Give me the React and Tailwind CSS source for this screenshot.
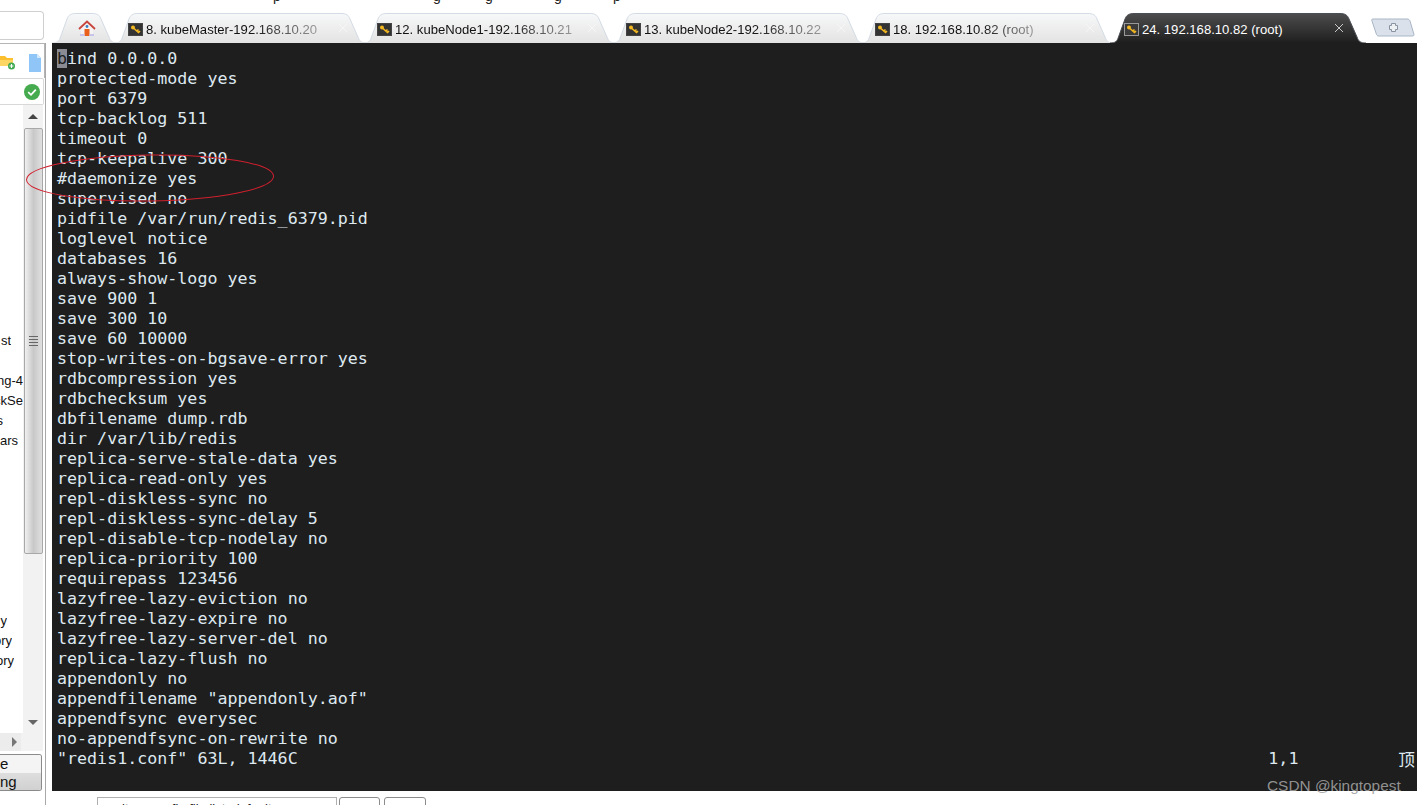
const lines = [
  "protected-mode yes",
  "port 6379",
  "tcp-backlog 511",
  "timeout 0",
  "tcp-keepalive 300",
  "#daemonize yes",
  "supervised no",
  "pidfile /var/run/redis_6379.pid",
  "loglevel notice",
  "databases 16",
  "always-show-logo yes",
  "save 900 1",
  "save 300 10",
  "save 60 10000",
  "stop-writes-on-bgsave-error yes",
  "rdbcompression yes",
  "rdbchecksum yes",
  "dbfilename dump.rdb",
  "dir /var/lib/redis",
  "replica-serve-stale-data yes",
  "replica-read-only yes",
  "repl-diskless-sync no",
  "repl-diskless-sync-delay 5",
  "repl-disable-tcp-nodelay no",
  "replica-priority 100",
  "requirepass 123456",
  "lazyfree-lazy-eviction no",
  "lazyfree-lazy-expire no",
  "lazyfree-lazy-server-del no",
  "replica-lazy-flush no",
  "appendonly no",
  'appendfilename "appendonly.aof"',
  "appendfsync everysec",
  "no-appendfsync-on-rewrite no",
];

const tabs = [
  "8. kubeMaster-192.168.10.20",
  "12. kubeNode1-192.168.10.21",
  "13. kubeNode2-192.168.10.22",
  "18. 192.168.10.82 (root)",
];

// rows of the session tree, only the right ends show, each cut at its own width
const treeRows = {
  11: { text: "st", width: "w-[11px]" },
  13: { text: "ng-4", width: "w-[23px]" },
  14: { text: "ckSe", width: "w-[23px]" },
  15: { text: "s", width: "w-[3px]" },
  16: { text: "ars", width: "w-[18px]" },
  25: { text: "y", width: "w-[7px]" },
  26: { text: "ory", width: "w-[12px]" },
  27: { text: "ory", width: "w-[14px]" },
};

function KeyIcon({ active }) {
  return (
    <svg width="15" height="13" viewBox="0 0 15 13" className="shrink-0">
      <rect x="0.5" y="0.5" width="14" height="12" fill={active ? "#3a3a3a" : "#333"} stroke={active ? "#999" : "#444"} />
      <circle cx="5" cy="4.5" r="2" fill="#f5b921" />
      <path d="M6 5.5 L11 10 M9 8 L10.5 6.5 M10.5 9.5 L12 8" stroke="#f5b921" strokeWidth="1.6" fill="none" />
    </svg>
  );
}

function TabShape({ w, active }) {
  let d = `M0 30 C6 30 7 28 8.5 24 L15 6 C16.5 2 19 0.5 24 0.5 H${w - 26} C${w - 21} 0.5 ${w - 18.5} 2 ${w - 17} 6 L${w - 9} 24 C${w - 7.5} 28 ${w - 6} 30 ${w} 30`;
  let id = active ? "tabActive" : "tabIdle";
  return (
    <svg width={w} height="30" className="absolute left-0 top-0">
      <defs>
        <linearGradient id={id} x1="0" y1="0" x2="0" y2="1">
          <stop offset="0" stopColor={active ? "#4d4d4d" : "#f7f8f9"} />
          <stop offset="1" stopColor={active ? "#1e1e1e" : "#e3e3e3"} />
        </linearGradient>
      </defs>
      <path d={d} fill={`url(#${id})`} stroke={active ? "#4a4f55" : "#d3dbe4"} />
    </svg>
  );
}

function Tab({ title, active }) {
  let w = active ? 256 : 253;
  return (
    <div className={`relative h-[30px] -ml-[4px] shrink-0 ${active ? "w-[256px]" : "w-[253px]"}`}>
      <TabShape w={w} active={active} />
      <div className="relative flex items-center h-[30px] pl-[14px] pt-[3px]">
        <KeyIcon active={active} />
        <span className={`ml-[3px] text-[13.1px] whitespace-nowrap ${active ? "text-white" : "bg-gradient-to-r from-[#111] from-[60%] to-[#999] bg-clip-text text-transparent"}`}>
          {title}
        </span>
      </div>
      <svg width="10" height="10" viewBox="0 0 10 10" className="absolute left-[224px] top-[10px]">
        <path d="M1 1 L9 9 M9 1 L1 9" stroke={active ? "#c8c8c8" : "#f6f6f6"} strokeWidth="1" />
      </svg>
    </div>
  );
}

function HomeTab() {
  return (
    <div className="relative h-[30px] w-[66px] shrink-0">
      <TabShape w={66} />
      <svg width="18" height="17" viewBox="0 0 18 17" className="absolute left-[26px] top-[7px]">
        <path d="M3 8 V15 H15 V8 L9 3 Z" fill="#f4f2f2" />
        <path d="M1 9 L9 1.5 L17 9" fill="none" stroke="#c8453c" strokeWidth="1.8" />
        <circle cx="9" cy="6.5" r="1.4" fill="#3a7fc0" />
        <rect x="6.5" y="9" width="5" height="7" fill="#e8601c" />
        <rect x="2" y="14" width="4.5" height="2" fill="#c6c4ea" />
        <rect x="11.5" y="14" width="4.5" height="2" fill="#c6c4ea" />
      </svg>
    </div>
  );
}

function Sidebar() {
  return (
    <div className="w-[52px] shrink-0 flex flex-col pt-[11px] bg-white">
      <div className="h-[29px] w-[44px] border border-l-0 border-[#cfcfcf] rounded-r-[4px] mb-[3px]" />
      <div className="w-[46px] flex-1 border-r border-[#a8a8a8] flex flex-col min-h-0">
        {/* toolbar */}
        <div className="h-[35px] w-[45px] border-t border-r border-[#b5b5b5] flex items-end justify-between pb-[6px] pr-[3px] shrink-0">
          <svg width="16" height="15" viewBox="0 0 16 15" className="mb-[2px]">
            <path d="M0 1 H5 L7 3 H13 V11 H0 Z" fill="#fcc02e" />
            <rect x="0" y="5" width="13" height="6" fill="#fdd663" />
            <circle cx="11.5" cy="11" r="3.5" fill="#3fa950" />
            <path d="M9.5 11 H13.5 M11.5 9 V13" stroke="#fff" strokeWidth="1.2" />
          </svg>
          <svg width="12" height="18" viewBox="0 0 12 18">
            <path d="M0 0 H8 L12 4 V18 H0 Z" fill="#90c6f7" />
            <path d="M8 0 L12 4 H8 Z" fill="#d4e8fb" />
          </svg>
        </div>
        {/* filter row */}
        <div className="h-[27px] w-[44px] border-y border-r border-[#d8d8d8] rounded-r-[2px] flex items-center justify-end pr-[3px] shrink-0">
          <svg width="16" height="16" viewBox="0 0 16 16">
            <circle cx="8" cy="8" r="8" fill="#46ab4f" />
            <path d="M4.2 8.2 L7 10.8 L11.8 5.6" fill="none" stroke="#fff" strokeWidth="1.8" />
          </svg>
        </div>
        {/* session tree */}
        <div className="flex h-[628px] shrink-0">
          <div className="w-[23px] pt-[6px] overflow-hidden font-['Liberation_Sans',sans-serif] text-[13px] text-[#111]">
            {Array.from({ length: 31 }).map((_, i) => (
              <div key={i} className={`h-[20px] leading-[20px] flex justify-end whitespace-nowrap overflow-hidden ${treeRows[i] ? treeRows[i].width : ""}`}>
                {treeRows[i] ? treeRows[i].text : ""}
              </div>
            ))}
          </div>
          <div className="w-[20px] bg-[#f2f2f2] flex flex-col items-center">
            <div className="h-[23px] shrink-0 flex items-center justify-center">
              <div className="w-0 h-0 border-x-[5px] border-x-transparent border-b-[5px] border-b-[#444]" />
            </div>
            <div className="w-[19px] h-[426px] shrink-0 rounded-[2px] border border-[#a8a8a8] bg-gradient-to-r from-[#f0f0f0] via-[#c8c8c8] to-[#e0e0e0] flex flex-col items-center justify-center gap-[2px]">
              <div className="w-[9px] h-[1px] bg-[#666]" />
              <div className="w-[9px] h-[1px] bg-[#666]" />
              <div className="w-[9px] h-[1px] bg-[#666]" />
              <div className="w-[9px] h-[1px] bg-[#666]" />
            </div>
            <div className="flex-1" />
            <div className="h-[22px] shrink-0 flex items-center justify-center">
              <div className="w-0 h-0 border-x-[5px] border-x-transparent border-t-[5px] border-t-[#666]" />
            </div>
          </div>
        </div>
        {/* horizontal scrollbar */}
        <div className="h-[18px] w-[43px] bg-[#f2f2f2] flex items-center shrink-0">
          <div className="w-[21px] h-full bg-[#ececec] flex items-center justify-end pr-[4px]">
            <div className="w-0 h-0 border-y-[5px] border-y-transparent border-l-[5px] border-l-[#777]" />
          </div>
        </div>
        {/* connect button */}
        <div className="h-[37px] w-[42px] mt-[3px] overflow-hidden rounded-r-[3px] border border-l-0 border-[#8a8a8a] flex flex-col font-['Liberation_Sans',sans-serif] text-[15px] text-[#111] shrink-0">
          <div className="h-[18px] bg-[#f4f4f4] leading-[18px]">e</div>
          <div className="flex-1 bg-gradient-to-b from-[#dedede] to-[#d0d0d0] leading-[18px] whitespace-nowrap">ng</div>
        </div>
      </div>
    </div>
  );
}

function App() {
  return (
    <div className="relative flex w-[1417px] h-[805px] overflow-hidden bg-white">
      <Sidebar />
      <div className="flex-1 min-w-0 flex flex-col">
        {/* tab strip */}
        <div className="h-[43px] shrink-0 pt-[13px] flex items-start font-['Liberation_Sans',sans-serif]">
          <HomeTab />
          {tabs.map((t) => (
            <Tab title={t} key={t} />
          ))}
          <Tab title="24. 192.168.10.82 (root)" active />
          <svg width="44" height="19" viewBox="0 0 44 19" className="ml-[5px] mt-[5px] shrink-0">
            <path d="M1.5 1 H36 C38 1 38.5 2 39 3 L43 16.5 C43.3 17.5 42.5 18 41 18 H8 C6.5 18 6 17.5 5.5 16.5 L1 3 C0.6 1.6 0.8 1 1.5 1 Z" fill="#dae1ea" stroke="#a9b6c6" />
            <path d="M20.5 5.5 H24.5 V7.5 H26.5 V11.5 H24.5 V13.5 H20.5 V11.5 H18.5 V7.5 H20.5 Z" fill="#eef1f4" stroke="#8894a2" />
          </svg>
        </div>

        {/* terminal */}
        <div className="h-[748px] shrink-0 bg-[#1e1e1e] pt-[6px] pl-[5px] pr-[2px] font-['DejaVu_Sans_Mono',monospace] text-[16.67px] leading-[20px] text-[#dfe9f0] whitespace-pre">
          <div>
            <span className="bg-[#8b8b94] text-[#1e1e1e]">b</span>ind 0.0.0.0
          </div>
          {lines.map((l, i) => (
            <div key={i}>{l}</div>
          ))}
          <div className="flex">
            <span className="flex-1">"redis1.conf" 63L, 1446C</span>
            <span className="w-[130px]">1,1</span>
            <span className="font-['Noto_Sans_CJK_SC',sans-serif]">顶</span>
          </div>
        </div>

        {/* bottom dialog edge */}
        <div className="flex-1 pt-[6px] pl-[45px] flex gap-[2px] items-start">
          <div className="w-[240px] h-[10px] border border-[#b0b0b0] pl-[24px] pt-[3px] leading-[16px] text-[13px] font-['Liberation_Sans',sans-serif] text-[#222] whitespace-pre overflow-hidden">
            {"lt            fig file list  default"}
          </div>
          <div className="w-[41px] h-[10px] border border-[#8c8c8c] rounded-t-[3px]" />
          <div className="w-[42px] h-[10px] ml-[2px] border border-[#8c8c8c] rounded-t-[3px]" />
        </div>
      </div>

      {/* descenders of the window title, cut by the top edge */}
      <div className="absolute left-0 top-0 w-full h-[4px] overflow-hidden font-['Liberation_Sans',sans-serif] text-[14px] leading-[14px] text-[#222]">
        <span className="absolute left-[273px] -top-[11px]">p</span>
        <span className="absolute left-[433px] -top-[11px]">g</span>
        <span className="absolute left-[485px] -top-[11px]">g</span>
        <span className="absolute left-[554px] -top-[11px]">g</span>
        <span className="absolute left-[613px] -top-[11px]">p</span>
      </div>

      {/* red hand drawn ellipse */}
      <svg width="260" height="60" viewBox="0 0 260 60" className="absolute left-[20px] top-[150px]">
        <ellipse cx="130" cy="28" rx="123.5" ry="23" fill="none" stroke="#d0202e" strokeWidth="1" transform="rotate(-0.8 130 28)" />
      </svg>

      {/* watermark */}
      <div className="absolute left-[1267px] top-[777px] text-[15.4px] leading-[18px] text-[#a0a0a0]/90 font-['Liberation_Sans',sans-serif] whitespace-nowrap">
        CSDN @kingtopest
      </div>
    </div>
  );
}

export default App;
